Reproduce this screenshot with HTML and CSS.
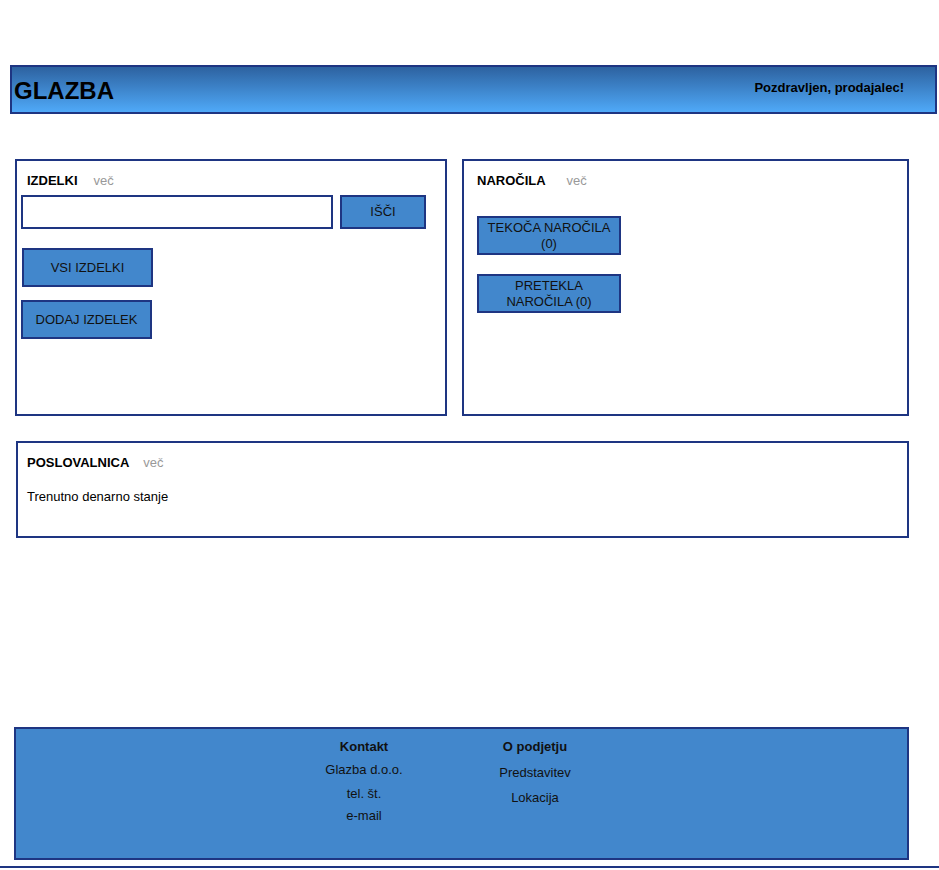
FILE: index.html
```html
<!DOCTYPE html>
<html lang="sl">
<head>
<meta charset="utf-8">
<title>Glazba</title>
<link rel="stylesheet" href="styles.css">
</head>
<body>
<div class="page">
  <header class="topbar">
    <h1 class="brand">GLAZBA</h1>
    <div class="greeting">Pozdravljen, prodajalec!</div>
  </header>

  <div class="row">
    <section class="panel panel-products">
      <div class="panel-head"><span class="panel-title">IZDELKI</span><span class="more more-a">več</span></div>
      <div class="search">
        <input class="search-input" type="text">
        <button class="btn btn-search">IŠČI</button>
      </div>
      <button class="btn btn-all">VSI IZDELKI</button>
      <button class="btn btn-add">DODAJ IZDELEK</button>
    </section>

    <section class="panel panel-orders">
      <div class="panel-head"><span class="panel-title">NAROČILA</span><span class="more more-b">več</span></div>
      <button class="btn btn-order">TEKOČA NAROČILA (0)</button>
      <button class="btn btn-order btn-order-2">PRETEKLA NAROČILA (0)</button>
    </section>
  </div>

  <section class="panel panel-shop">
    <div class="panel-head"><span class="panel-title">POSLOVALNICA</span><span class="more more-c">več</span></div>
    <p class="balance">Trenutno denarno stanje</p>
  </section>

  <footer class="footer">
    <div class="fcol">
      <div class="fhead">Kontakt</div>
      <div class="fitem f1">Glazba d.o.o.</div>
      <div class="fitem f2">tel. št.</div>
      <div class="fitem f3">e-mail</div>
    </div>
    <div class="fcol">
      <div class="fhead">O podjetju</div>
      <div class="fitem g1">Predstavitev</div>
      <div class="fitem g2">Lokacija</div>
    </div>
  </footer>
  <div class="bottomline"></div>
</div>
</body>
</html>
```

FILE: styles.css
```css
* { box-sizing: border-box; }

html, body {
  margin: 0;
  padding: 0;
  background: #ffffff;
  font-family: "Liberation Sans", Arial, sans-serif;
  color: #000;
}

.page {
  width: 939px;
  padding-top: 65px;
}

.topbar {
  margin-left: 10px;
  width: 927px;
  height: 49px;
  border: 2px solid #1e3582;
  background: linear-gradient(#2d62a0, #4fa9f8);
  display: flex;
  align-items: center;
  justify-content: space-between;
  padding: 0 31px 0 2px;
}

.brand {
  margin: 2px 0 0 0;
  font-size: 24px;
  font-weight: bold;
  line-height: 28px;
}

.greeting {
  font-size: 13px;
  font-weight: bold;
  margin-top: -4px;
}

.row {
  display: flex;
  gap: 15px;
  margin: 45px 0 0 15px;
}

.panel {
  border: 2px solid #1e3582;
  background: #fff;
  display: flex;
  flex-direction: column;
  align-items: flex-start;
}

.panel-products {
  width: 432px;
  height: 257px;
  padding: 12px 0 0 4px;
}

.panel-orders {
  width: 447px;
  height: 257px;
  padding: 12px 0 0 13px;
}

.panel-head {
  height: 16px;
  line-height: 16px;
  font-size: 13px;
  display: flex;
}

.panel-products .panel-head { padding-left: 6px; }

.panel-title { font-weight: bold; }

.more { color: #999; font-weight: normal; }
.more-a { margin-left: 16px; }
.more-b { margin-left: 21px; }
.more-c { margin-left: 14px; }

.search {
  display: flex;
  gap: 7px;
  margin-top: 6px;
}

.search-input {
  width: 312px;
  height: 34px;
  border: 2px solid #1e3582;
  margin: 0;
  padding: 0 4px;
  background: #fff;
}

.btn {
  background: #4287cc;
  border: 2px solid #1e3582;
  font-family: "Liberation Sans", Arial, sans-serif;
  font-size: 13px;
  line-height: 16px;
  color: #111;
  margin: 0;
  padding: 0;
  text-align: center;
}

.btn-search {
  width: 86px;
  height: 34px;
}

.btn-all {
  width: 131px;
  height: 39px;
  margin: 19px 0 0 1px;
}

.btn-add {
  width: 131px;
  height: 39px;
  margin-top: 13px;
}

.btn-order {
  width: 144px;
  height: 39px;
  margin-top: 27px;
  padding: 0 4px;
}

.btn-order-2 { margin-top: 19px; }

.panel-shop {
  width: 893px;
  height: 97px;
  margin: 25px 0 0 16px;
  padding: 12px 0 0 9px;
}

.balance {
  margin: 18px 0 0 0;
  font-size: 13px;
  line-height: 16px;
}

.footer {
  margin: 189px 0 0 14px;
  width: 895px;
  height: 133px;
  background: #4287cc;
  border: 2px solid #1e3582;
  display: flex;
  gap: 51px;
  padding: 10px 0 0 288px;
  color: #111;
}

.fcol {
  width: 120px;
  text-align: center;
  font-size: 13px;
  line-height: 16px;
}

.fhead { font-weight: bold; }

.f1 { margin-top: 7px; }
.f2 { margin-top: 8px; }
.f3 { margin-top: 6px; }
.g1 { margin-top: 10px; }
.g2 { margin-top: 9px; }

.bottomline {
  margin-top: 6px;
  height: 2px;
  background: #1e3582;
  width: 939px;
}
```
